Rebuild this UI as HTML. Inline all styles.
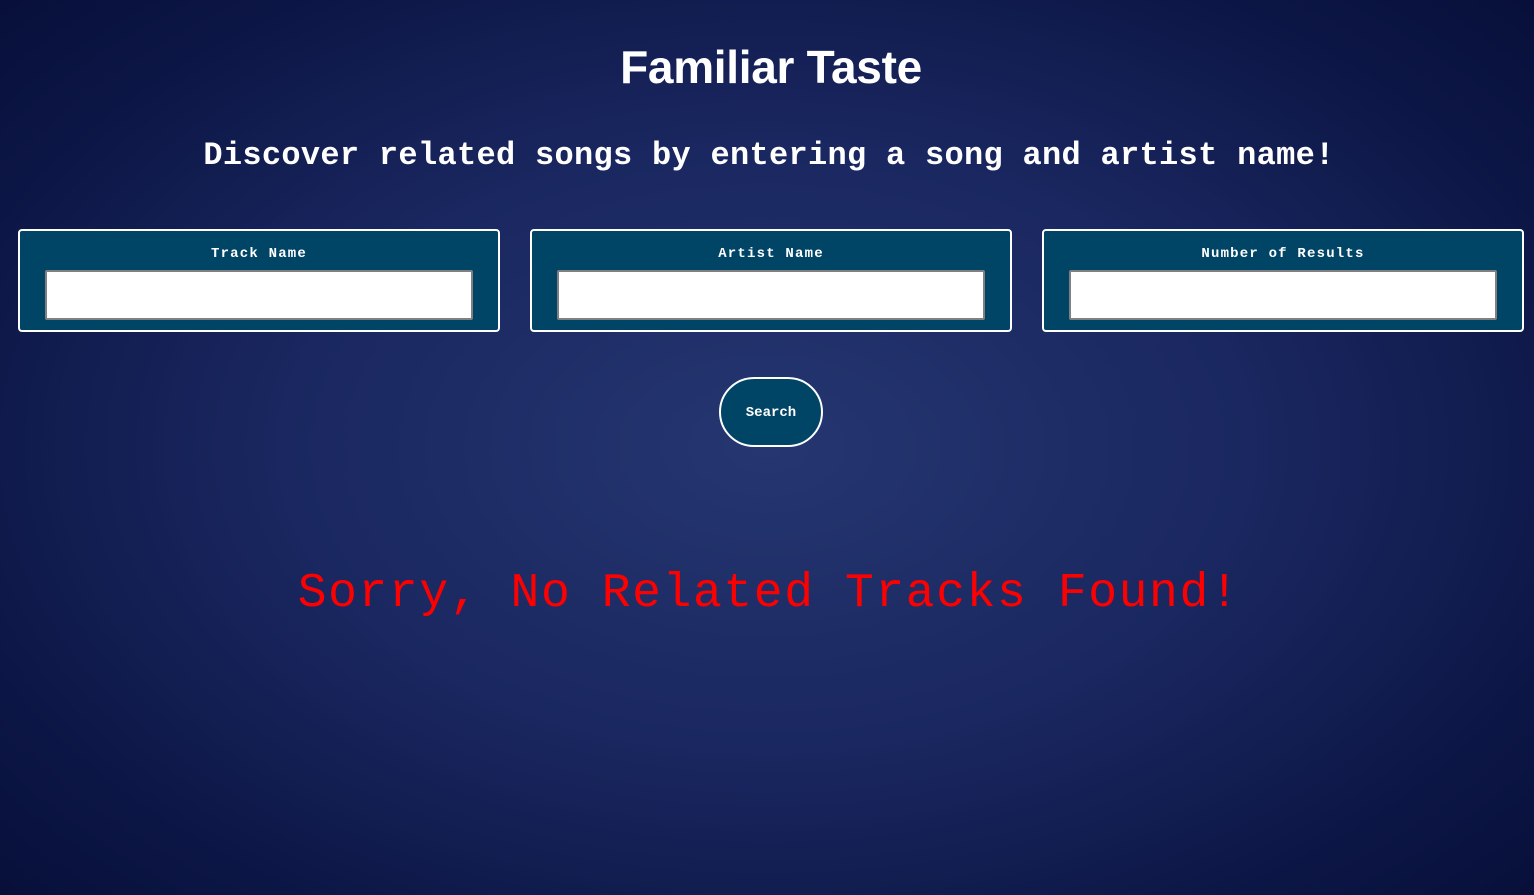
<!DOCTYPE html><html><head><style>
body{margin:0;width:1534px;height:895px;overflow:hidden;background:radial-gradient(ellipse 70% 75% at 50% 50%,#253670 0%,#1a2760 45%,#0c1645 80%,#070f38 100%);font-family:"Liberation Mono",monospace;color:#fff;position:relative}
h1{position:absolute;top:40px;left:4px;width:100%;margin:0;text-align:center;font:bold 46px "Liberation Sans",sans-serif;letter-spacing:-0.3px}
.sub{position:absolute;top:137px;left:2px;width:100%;text-align:center;font-weight:bold;font-size:32px;letter-spacing:0.3px;white-space:nowrap}
.box{position:absolute;top:229px;width:478px;height:99px;border:2px solid #fff;border-radius:4px;background:#004466}
.box span{position:absolute;top:15px;left:0;width:100%;text-align:center;font-weight:bold;font-size:14px;letter-spacing:1.2px}
.box i{position:absolute;left:25px;top:39px;width:424px;height:46px;background:#fff;border:2px solid #808080;border-radius:2px}
.btn{position:absolute;left:719px;top:377px;width:100px;height:66px;border:2px solid #fff;border-radius:35px;background:#004466;text-align:center;line-height:68px;font-weight:bold;font-size:14px}
.err{position:absolute;top:567px;left:2px;width:100%;text-align:center;color:#f00;font-size:48px;letter-spacing:1.6px;white-space:nowrap}
</style></head><body>
<h1>Familiar Taste</h1>
<div class="sub">Discover related songs by entering a song and artist name!</div>
<div class="box" style="left:18px"><span>Track Name</span><i></i></div>
<div class="box" style="left:530px"><span>Artist Name</span><i></i></div>
<div class="box" style="left:1042px"><span>Number of Results</span><i></i></div>
<div class="btn">Search</div>
<div class="err">Sorry, No Related Tracks Found!</div>
</body></html>
